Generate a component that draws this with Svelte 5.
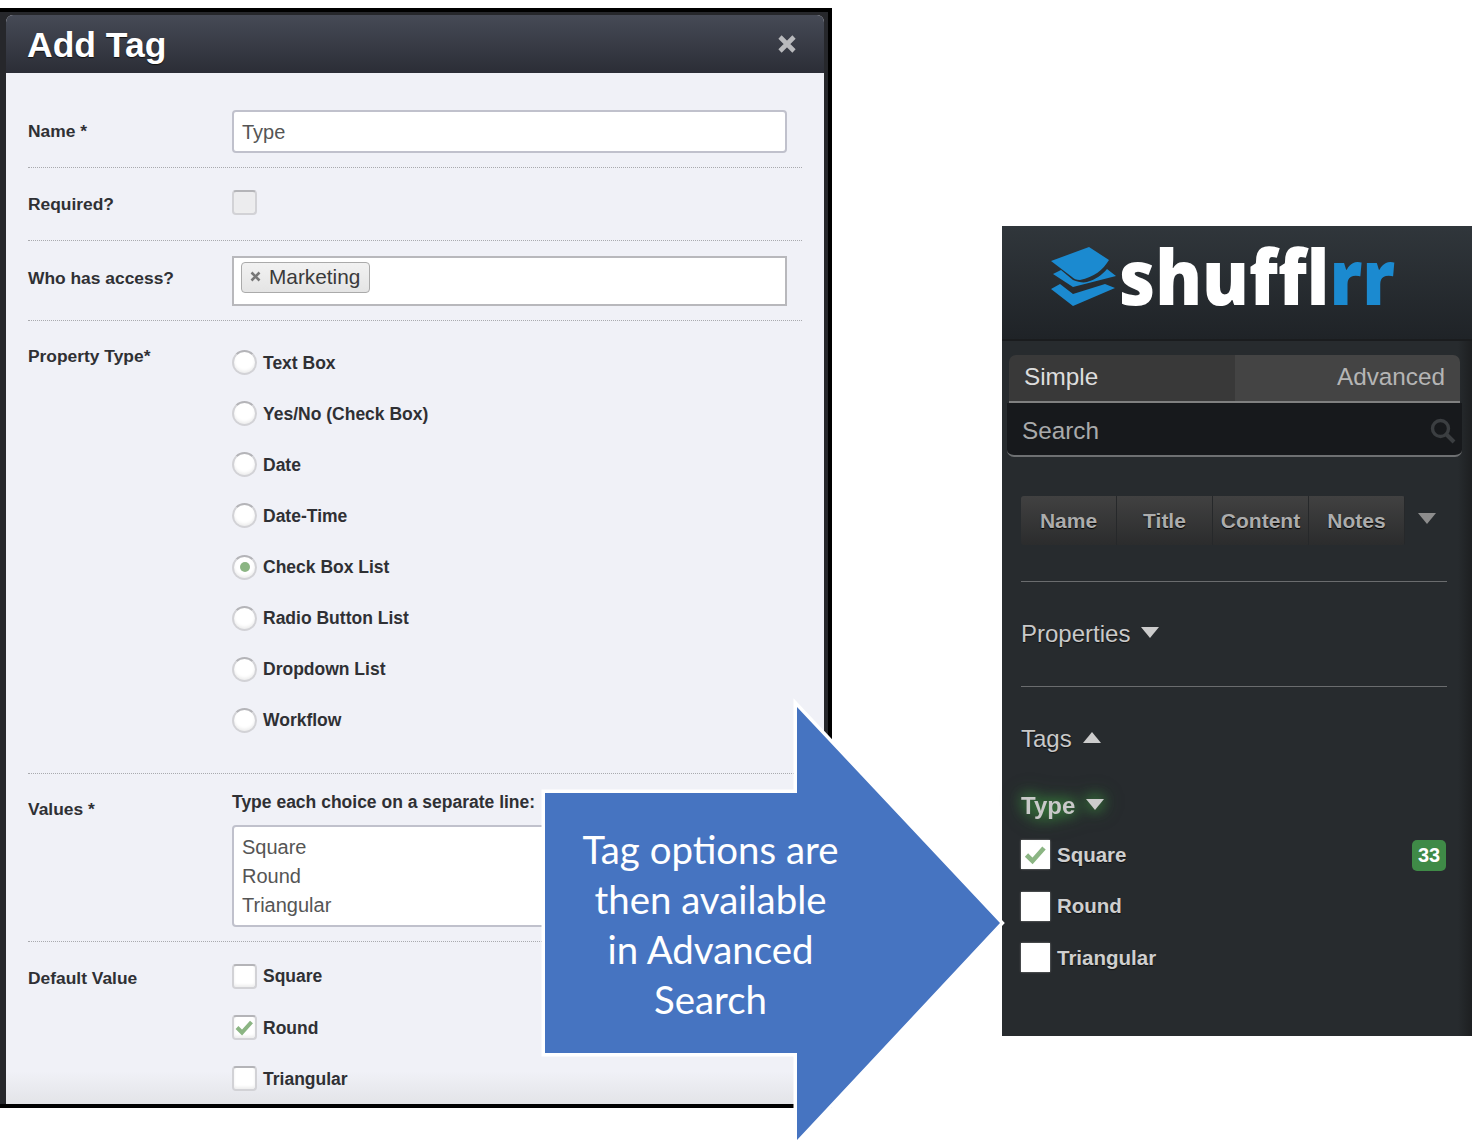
<script>
  const propertyTypes = [
    { label: "Text Box" },
    { label: "Yes/No (Check Box)" },
    { label: "Date" },
    { label: "Date-Time" },
    { label: "Check Box List", selected: true },
    { label: "Radio Button List" },
    { label: "Dropdown List" },
    { label: "Workflow" }
  ];
  const defaults = [
    { label: "Square" },
    { label: "Round", checked: true },
    { label: "Triangular" }
  ];
  const tagValues = [
    { label: "Square", checked: true, count: 33 },
    { label: "Round" },
    { label: "Triangular" }
  ];
  const fields = ["Name", "Title", "Content", "Notes"];
</script>

<div class="canvas">
  <!-- left screenshot: the modal -->
  <section class="shot-modal">
    <div class="modal">
      <header class="modal-head">
        <h1>Add Tag</h1>
        <svg class="close" width="20" height="20" viewBox="0 0 20 20">
          <path d="M3 3l14 14M17 3L3 17" stroke="#b9babd" stroke-width="4.6" fill="none" />
        </svg>
      </header>

      <div class="modal-body">
        <div class="row row-name">
          <div class="label">Name *</div>
          <div class="input">Type</div>
        </div>

        <div class="row row-required">
          <div class="label">Required?</div>
          <span class="check grey"></span>
        </div>

        <div class="row row-access">
          <div class="label">Who has access?</div>
          <div class="input tags">
            <span class="tag">
              <svg width="11" height="11" viewBox="0 0 11 11">
                <path d="M1.5 1.5l8 8M9.5 1.5l-8 8" stroke="#777" stroke-width="2.6" fill="none" />
              </svg>
              Marketing
            </span>
          </div>
        </div>

        <div class="row row-type">
          <div class="label">Property Type*</div>
          <div class="options">
            {#each propertyTypes as opt}
              <div class="option">
                <span class="radio" class:selected={opt.selected}></span>
                {opt.label}
              </div>
            {/each}
          </div>
        </div>

        <div class="row row-values">
          <div class="label">Values *</div>
          <div>
            <div class="hint">Type each choice on a separate line:</div>
            <div class="input area">
              <div>Square</div>
              <div>Round</div>
              <div>Triangular</div>
            </div>
          </div>
        </div>

        <div class="row row-default">
          <div class="label">Default Value</div>
          <div class="options">
            {#each defaults as opt}
              <div class="option">
                <span class="check">
                  {#if opt.checked}
                    <svg width="23" height="23" viewBox="0 0 23 23">
                      <path d="M4 11.5l5 5 9.5-10.5" stroke="#8bb583" stroke-width="4" fill="none" />
                    </svg>
                  {/if}
                </span>
                {opt.label}
              </div>
            {/each}
          </div>
        </div>
      </div>
    </div>
  </section>

  <!-- right screenshot: the search sidebar -->
  <aside class="shot-sidebar">
    <div class="brand">
      <svg class="logo-mark" width="68" height="62" viewBox="0 0 68 62">
        <path d="M1 15 L39 1 L59 14 C53 24 44 31 30 34 C26 34 24 33 22 31 Z" fill="#1b8ad0" />
        <path d="M3 28 L11 24 L23 34 C28 36 33 37 37 36 C45 34 52 29 57 23 L66 30 L23 41 Z" fill="#1b8ad0" />
        <path d="M1 43 L10 38 L23 48 L55 38 L65 42 L23 60 Z" fill="#1b8ad0" />
      </svg>
      <span class="wordmark">shuffl<span class="blue">rr</span></span>
    </div>

    <div class="tabs">
      <div class="tab simple">Simple</div>
      <div class="tab advanced">Advanced</div>
    </div>
    <div class="search">
      <span>Search</span>
      <svg width="28" height="28" viewBox="0 0 28 28">
        <circle cx="11.5" cy="11.5" r="8" stroke="#3b3e41" stroke-width="3.4" fill="none" />
        <path d="M17.5 17.5l7.5 7.5" stroke="#3b3e41" stroke-width="4" />
      </svg>
    </div>

    <div class="fields">
      <div class="seg">
        {#each fields as f}
          <div class="seg-btn">{f}</div>
        {/each}
      </div>
      <span class="caret down grey"></span>
    </div>

    <div class="section ruled">
      <span>Properties</span><span class="caret down"></span>
    </div>
    <div class="section ruled">
      <span>Tags</span><span class="caret up"></span>
    </div>

    <div class="type-head">
      <span>Type</span><span class="caret down"></span>
    </div>
    {#each tagValues as t}
      <div class="tag-row">
        <span class="side-check">
          {#if t.checked}
            <svg width="29" height="29" viewBox="0 0 29 29">
              <path d="M5.5 15l6 6 11.5-13" stroke="#8bb583" stroke-width="4.6" fill="none" />
            </svg>
          {/if}
        </span>
        <span class="tag-name">{t.label}</span>
        {#if t.count}
          <span class="badge">{t.count}</span>
        {/if}
      </div>
    {/each}
  </aside>

  <!-- callout arrow lying over both -->
  <svg class="arrow" width="1476" height="1148" viewBox="0 0 1476 1148">
    <polygon
      points="545,793 797,793 797,707 1000,923 797,1140 797,1053 545,1053"
      fill="#4674c1"
      stroke="#fff"
      stroke-width="7"
      paint-order="stroke"
    />
  </svg>
  <div class="arrow-text">Tag options are<br />then available<br />in Advanced<br />Search</div>
</div>

<style>
  :global(body) {
    margin: 0;
    background: #fff;
  }

  .canvas {
    position: relative;
    width: 1476px;
    height: 1148px;
    overflow: hidden;
    font-family: "Liberation Sans", Arial, sans-serif;
  }

  /* modal screenshot */
  .shot-modal {
    position: absolute;
    left: 0;
    top: 8px;
    width: 818px;
    height: 1089px;
    padding: 3px 4px 0 6px;
    background: #26272b;
    border-top: 4px solid #000;
    border-right: 4px solid #000;
    border-bottom: 4px solid #000;
  }

  .modal {
    height: 100%;
    display: flex;
    flex-direction: column;
    background: linear-gradient(to bottom, #f0f1f7 97%, #e3e4e8 100%);
    border-radius: 7px 7px 0 0;
    overflow: hidden;
  }

  .modal-head {
    flex: none;
    height: 58px;
    display: flex;
    align-items: center;
    justify-content: space-between;
    padding: 0 27px 0 21px;
    box-sizing: border-box;
    background: linear-gradient(to bottom, #464a56, #2b2d36);
  }

  .modal-head h1 {
    margin: 2px 0 0;
    color: #fff;
    font-size: 35.5px;
    font-weight: bold;
    text-shadow: 0 1px 1px #111;
  }

  .modal-body {
    padding: 0 22px;
    color: #2f3034;
  }

  .row {
    display: grid;
    grid-template-columns: 204px 1fr;
    border-bottom: 1px dotted #a9aaae;
    align-items: start;
  }

  .row-name { padding: 37px 15px 14px 0; }
  .row-required { padding: 22px 0 25px; }
  .row-access { padding: 15px 15px 14px 0; }
  .row-type { padding: 29px 0 40px; }
  .row-values { padding: 18px 15px 14px 0; }
  .row-default { padding: 22px 0 0; border-bottom: 0; }

  .label,
  .option,
  .hint {
    font-size: 17.5px;
    font-weight: bold;
    line-height: 20px;
    white-space: nowrap;
  }

  .label {
    font-size: 17.4px;
  }

  .row-name .label { margin-top: 11px; }
  .row-required .label { margin-top: 4px; }
  .row-access .label { margin-top: 12px; }
  .row-type .label { margin-top: -4px; }
  .row-values .label { margin-top: 7px; }
  .row-default .label { margin-top: 4px; }

  .input {
    box-sizing: border-box;
    height: 43px;
    padding: 2px 8px 0;
    display: flex;
    align-items: center;
    background: #fff;
    border: 2px solid #c0c1cc;
    border-radius: 4px;
    font-size: 20px;
    color: #555;
  }

  .input.tags {
    height: 50px;
    border-radius: 0;
    align-items: flex-start;
    padding: 4px 7px;
    border-color: #b8b8bc;
  }

  .tag {
    display: inline-flex;
    align-items: center;
    gap: 8px;
    height: 31px;
    box-sizing: border-box;
    padding: 0 9px 2px 8px;
    background: linear-gradient(to bottom, #f2f2f2, #e4e4e4);
    border: 1px solid #aaa;
    border-radius: 4px;
    font-size: 20.8px;
    color: #3a3a3a;
  }

  .input.area {
    display: block;
    height: 102px;
    margin-top: 13px;
    padding: 6px 8px;
    line-height: 29px;
  }

  .hint {
    color: #2f3034;
  }

  .options {
    display: flex;
    flex-direction: column;
    gap: 26.15px;
  }

  .option {
    display: flex;
    align-items: center;
    gap: 6px;
    height: 25px;
  }

  .radio,
  .check {
    flex: none;
    box-sizing: border-box;
    width: 25px;
    height: 25px;
    display: block;
    background: #fff;
    border: 2px solid #d2d2d6;
    border-top-color: #b4b4b8;
    box-shadow: inset 0 -2px 3px #eee;
  }

  .radio {
    border-radius: 50%;
    position: relative;
  }

  .radio.selected::after {
    content: "";
    position: absolute;
    left: 5.5px;
    top: 5.5px;
    width: 10px;
    height: 10px;
    border-radius: 50%;
    background: #8bb583;
  }

  .check {
    border-radius: 4px;
  }

  .check svg {
    display: block;
    margin: -1px;
  }

  .check.grey {
    background: #ececee;
  }

  /* sidebar screenshot */
  .shot-sidebar {
    position: absolute;
    left: 1002px;
    top: 226px;
    width: 470px;
    height: 810px;
    background: linear-gradient(to right, #272b2e 97%, #1d1f21 100%);
  }

  .brand {
    height: 115px;
    box-sizing: border-box;
    display: flex;
    align-items: flex-start;
    padding: 19px 0 0 48px;
    background: linear-gradient(to bottom, #30363b, #1f2327);
    border-bottom: 2px solid #1a1c1e;
  }

  .logo-mark {
    flex: none;
    margin-top: 1px;
  }

  .wordmark {
    margin: -17px 0 0 1px;
    font-family: "Open Sans", sans-serif;
    font-weight: 800;
    font-size: 70px;
    line-height: 100px;
    font-variant-ligatures: none;
    color: #fff;
    transform: scaleY(1.1);
    transform-origin: 0 77%;
  }

  .blue {
    color: #1b8ad0;
  }

  .tabs {
    display: flex;
    height: 48px;
    margin: 14px 12px 0 7px;
    border-radius: 7px 7px 0 0;
    overflow: hidden;
    border-bottom: 2px solid #808080;
    box-sizing: border-box;
  }

  .tab {
    display: flex;
    align-items: center;
    font-size: 24.3px;
    padding: 0 15px 2px;
  }

  .tab.simple {
    width: 226px;
    box-sizing: border-box;
    background: #393939;
    color: #ddd;
  }

  .tab.advanced {
    flex: 1;
    justify-content: flex-end;
    background: #444;
    color: #b5b5b5;
  }

  .search {
    display: flex;
    align-items: center;
    justify-content: space-between;
    height: 54px;
    box-sizing: border-box;
    margin: 0 10px 0 5px;
    padding: 3px 5px 0 15px;
    background: #17191c;
    border-bottom: 2px solid #6e7072;
    border-radius: 0 0 7px 7px;
    font-size: 24.3px;
    color: #a9aaab;
  }

  .fields {
    display: flex;
    align-items: center;
    gap: 13px;
    margin: 39px 0 0 19px;
  }

  .seg {
    display: flex;
    width: 384px;
    height: 49px;
    border-radius: 3px;
    overflow: hidden;
  }

  .seg-btn {
    flex: 1;
    display: flex;
    align-items: center;
    justify-content: center;
    background: linear-gradient(to bottom, #414141, #2b2c2d);
    border-right: 1px solid #26282a;
    font-size: 21px;
    font-weight: bold;
    color: #acacac;
    text-shadow: 0 1px 1px #000;
  }

  .caret {
    display: inline-block;
    width: 0;
    height: 0;
    border-left: 9.5px solid transparent;
    border-right: 9.5px solid transparent;
  }

  .caret.down {
    border-top: 11px solid #ccc;
  }

  .caret.up {
    border-bottom: 11px solid #ccc;
  }

  .caret.down.grey {
    border-top-color: #8d8d8d;
    margin-top: -4px;
  }

  .section {
    display: flex;
    align-items: center;
    gap: 11px;
    height: 105px;
    box-sizing: border-box;
    margin: 0 25px 0 19px;
    font-size: 24px;
    color: #c9c9c9;
    text-shadow: 0 1px 1px #111;
  }

  .section .caret {
    margin-top: -3px;
  }

  .fields + .section {
    margin-top: 36px;
  }

  .ruled {
    border-top: 1px solid #6a6c6e;
  }

  .type-head {
    display: flex;
    align-items: center;
    gap: 11px;
    width: max-content;
    height: 30px;
    margin: 0 0 0 19px;
    font-size: 24px;
    font-weight: bold;
    color: #c9c9c9;
    filter: drop-shadow(0 0 7px rgba(64, 160, 64, 0.9)) drop-shadow(0 0 8px rgba(50, 130, 55, 0.7));
  }

  .type-head .caret {
    margin-top: -3px;
  }

  .tag-row {
    display: flex;
    align-items: center;
    gap: 7px;
    height: 31px;
    margin: 0 26px 0 19px;
  }

  .type-head + .tag-row {
    margin-top: 19px;
  }

  .tag-row + .tag-row {
    margin-top: 20.6px;
  }

  .side-check {
    flex: none;
    width: 29px;
    height: 29px;
    margin-top: -2px;
    background: #fff;
    box-shadow: 0 0 2px #888;
  }

  .side-check svg {
    display: block;
  }

  .tag-name {
    margin-top: -2px;
    font-size: 20.5px;
    font-weight: bold;
    color: #cfcfcf;
    text-shadow: 0 1px 1px #111;
  }

  .badge {
    margin-left: auto;
    box-sizing: border-box;
    width: 34px;
    height: 31px;
    line-height: 31px;
    text-align: center;
    border-radius: 5px;
    background: #3f8a47;
    color: #fff;
    font-size: 20px;
    font-weight: bold;
  }

  /* callout */
  .arrow {
    position: absolute;
    left: 0;
    top: 0;
    pointer-events: none;
  }

  .arrow-text {
    position: absolute;
    left: 545px;
    top: 824px;
    width: 331px;
    text-align: center;
    font-family: Lato, "Open Sans", sans-serif;
    font-size: 38.4px;
    line-height: 50px;
    color: #fff;
  }
</style>
